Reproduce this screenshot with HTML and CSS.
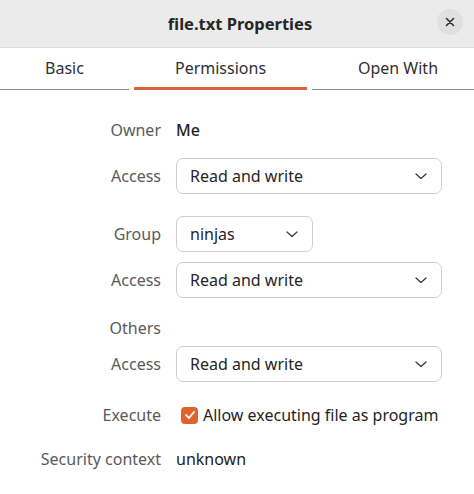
FILE: index.html
```html
<!DOCTYPE html>
<html>
<head>
<meta charset="utf-8">
<link rel="stylesheet" href="styles.css">
</head>
<body>
<div class="window">
  <header class="titlebar">
    <div class="title">file.txt Properties</div>
    <button class="close" aria-label="Close">
      <svg width="10" height="10" viewBox="0 0 10 10"><path d="M1.5 1.5 L8.5 8.5 M8.5 1.5 L1.5 8.5" stroke="#2e2e2e" stroke-width="1.6" stroke-linecap="round"/></svg>
    </button>
  </header>
  <nav class="tabs">
    <div class="tab tab-basic">Basic</div>
    <div class="tab tab-perm active">Permissions</div>
    <div class="tab tab-open">Open With</div>
  </nav>
  <main class="content">
    <div class="row r-owner"><div class="label">Owner</div><div class="value strong">Me</div></div>
    <div class="row r-access1"><div class="label">Access</div>
      <div class="dropdown wide"><span>Read and write</span><svg class="chev" width="12" height="7" viewBox="0 0 12 7"><path d="M1 1 L6 5.5 L11 1" fill="none" stroke="#3a3a3a" stroke-width="1.3" stroke-linecap="round" stroke-linejoin="round"/></svg></div>
    </div>
    <div class="row r-group"><div class="label">Group</div>
      <div class="dropdown narrow"><span>ninjas</span><svg class="chev" width="12" height="7" viewBox="0 0 12 7"><path d="M1 1 L6 5.5 L11 1" fill="none" stroke="#3a3a3a" stroke-width="1.3" stroke-linecap="round" stroke-linejoin="round"/></svg></div>
    </div>
    <div class="row r-access2"><div class="label">Access</div>
      <div class="dropdown wide"><span>Read and write</span><svg class="chev" width="12" height="7" viewBox="0 0 12 7"><path d="M1 1 L6 5.5 L11 1" fill="none" stroke="#3a3a3a" stroke-width="1.3" stroke-linecap="round" stroke-linejoin="round"/></svg></div>
    </div>
    <div class="row r-others"><div class="label">Others</div><div class="value"></div></div>
    <div class="row r-access3"><div class="label">Access</div>
      <div class="dropdown wide"><span>Read and write</span><svg class="chev" width="12" height="7" viewBox="0 0 12 7"><path d="M1 1 L6 5.5 L11 1" fill="none" stroke="#3a3a3a" stroke-width="1.3" stroke-linecap="round" stroke-linejoin="round"/></svg></div>
    </div>
    <div class="row r-exec"><div class="label">Execute</div>
      <label class="check"><span class="box"><svg width="12" height="10" viewBox="0 0 12 10"><path d="M2 5 L5 8 L10 2" fill="none" stroke="#fff" stroke-width="1.8" stroke-linecap="round" stroke-linejoin="round"/></svg></span><span class="check-text">Allow executing file as program</span></label>
    </div>
    <div class="row r-sec"><div class="label">Security context</div><div class="value">unknown</div></div>
  </main>
</div>
</body>
</html>
```
FILE: styles.css
```css
* { box-sizing: border-box; }
html, body { margin: 0; padding: 0; }
body {
  background: #ffffff;
  font-family: "Noto Sans", "Open Sans", sans-serif;
  color: #2a2a2a;
  width: 474px;
  height: 494px;
  overflow: hidden;
}
.titlebar {
  height: 48px;
  background: #ebebeb;
  border-bottom: 1px solid #dcdcdc;
  display: flex;
  align-items: center;
  justify-content: center;
  position: relative;
}
.title {
  font-weight: 700;
  font-size: 16.5px;
  color: #262626;
  margin-left: 6px;
}
.close {
  position: absolute;
  right: 11px;
  top: 9px;
  width: 26px;
  height: 26px;
  border-radius: 50%;
  border: none;
  background: #e0e0e0;
  display: flex;
  align-items: center;
  justify-content: center;
  padding: 0;
}
.tabs {
  display: flex;
  height: 42px;
  align-items: stretch;
  gap: 5px;
}
.tab {
  display: flex;
  align-items: center;
  justify-content: center;
  font-size: 16px;
  color: #303030;
  border-bottom: 1px solid #8a8a8a;
  padding-bottom: 1px;
}
.tab-basic { width: 129px; }
.tab-perm { width: 173px; }
.tab-open { flex: 1; padding-left: 10px; }
.tab.active { border-bottom: 3px solid #d9623a; padding-bottom: 0; }
.content {
  display: flex;
  flex-direction: column;
}
.row {
  display: flex;
  align-items: center;
  height: 36px;
  gap: 15px;
}
.label {
  width: 161px;
  text-align: right;
  font-size: 16px;
  color: #5a5a5a;
  flex: none;
}
.value { font-size: 16px; color: #222; }
.strong { font-weight: 500; }
.r-owner { margin-top: 22px; }
.r-access1 { margin-top: 10px; }
.r-group { margin-top: 22px; }
.r-access2 { margin-top: 10px; }
.r-others { margin-top: 20px; height: 20px; }
.r-access3 { margin-top: 8px; }
.r-exec { margin-top: 15px; }
.r-sec { margin-top: 8px; }
.dropdown {
  height: 36px;
  border: 1px solid #cfcfcf;
  border-radius: 7px;
  display: flex;
  align-items: center;
  justify-content: space-between;
  padding: 0 14px 0 13px;
  font-size: 16px;
  color: #252525;
  background: #fff;
}
.dropdown.wide { width: 266px; }
.dropdown.narrow { width: 137px; }
.check {
  display: flex;
  align-items: center;
  gap: 5px;
  padding-left: 5px;
}
.box {
  width: 17px;
  height: 17px;
  border-radius: 4px;
  background: #e0622e;
  display: flex;
  align-items: center;
  justify-content: center;
}
.check-text { font-size: 16px; color: #1f1f1f; }
```
